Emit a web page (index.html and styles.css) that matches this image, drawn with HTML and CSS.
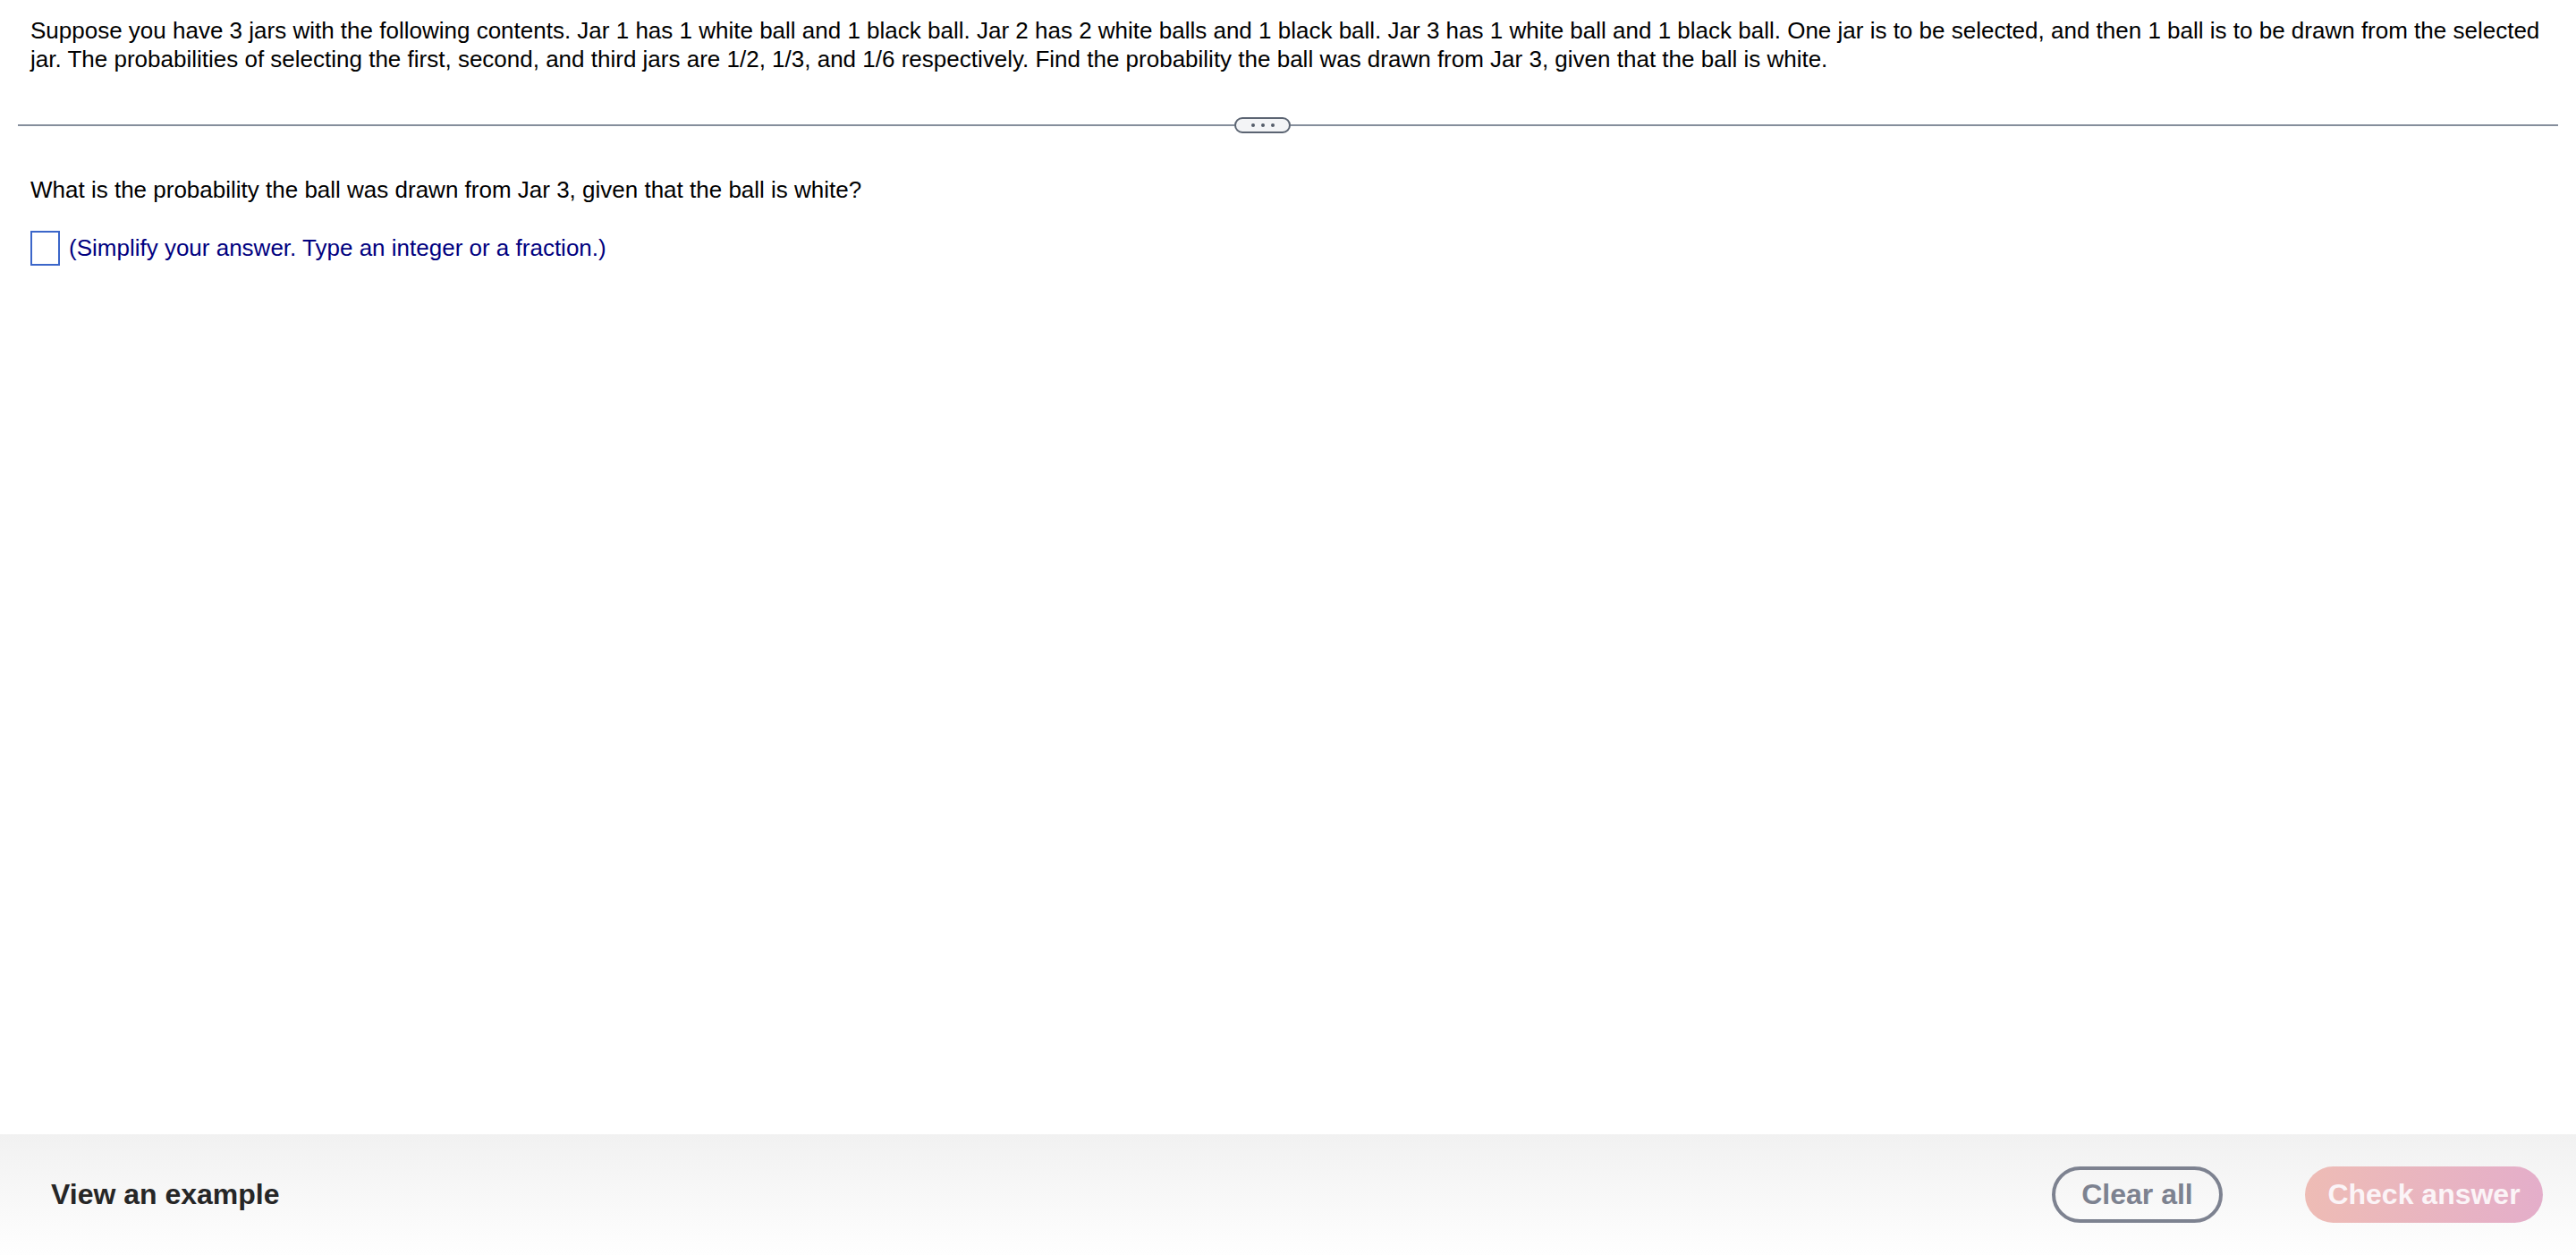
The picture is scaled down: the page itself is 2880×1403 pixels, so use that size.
FILE: index.html
```html
<!DOCTYPE html>
<html lang="en">
<head>
  <meta charset="UTF-8">
  <title>Question</title>
  <link rel="stylesheet" href="styles.css">
</head>
<body>
  <div class="page">
    <div class="main">
      <p class="problem">Suppose you have 3 jars with the following contents. Jar 1 has 1 white ball and 1 black ball. Jar 2 has 2 white balls and 1 black ball. Jar 3 has 1 white ball and 1 black ball. One jar is to be selected, and then 1 ball is to be drawn from the selected jar. The probabilities of selecting the first, second, and third jars are 1/2, 1/3, and 1/6 respectively. Find the probability the ball was drawn from Jar 3, given that the ball is white.</p>

      <div class="divider">
        <span class="rule rule-left"></span>
        <button class="more"><span></span><span></span><span></span></button>
        <span class="rule"></span>
      </div>

      <p class="question">What is the probability the ball was drawn from Jar 3, given that the ball is white?</p>

      <div class="answer">
        <input type="text" class="answer-box">
        <span class="hint">(Simplify your answer. Type an integer or a fraction.)</span>
      </div>
    </div>

    <div class="footer">
      <a class="example">View an example</a>
      <div class="actions">
        <button class="clear">Clear all</button>
        <button class="check" disabled>Check answer</button>
      </div>
    </div>
  </div>
</body>
</html>
```

FILE: styles.css
```css
body {
  margin: 0;
  padding: 0;
  font-family: "Liberation Sans", Arial, sans-serif;
  color: #000;
  background: #fff;
}

.page {
  display: flex;
  flex-direction: column;
  height: 100vh;
}

.main {
  flex: 1;
}

.problem {
  margin: 0;
  padding: 18px 34px 0;
  font-size: 26px;
  line-height: 32px;
}

.divider {
  display: flex;
  align-items: center;
  margin: 49px 20px 0;
  height: 18px;
}

.rule {
  flex: 1;
  height: 2px;
  background: #858e9c;
}

.rule-left {
  flex: 0 0 1360px;
}

.more {
  display: flex;
  align-items: center;
  justify-content: center;
  gap: 7px;
  width: 63px;
  height: 18px;
  padding: 0;
  border: 2px solid #5b6472;
  border-radius: 9px;
  background: #f3f4f6;
}

.more span {
  width: 4px;
  height: 4px;
  border-radius: 50%;
  background: #555d6a;
}

.question {
  margin: 0;
  padding: 47px 34px 0;
  font-size: 26px;
  line-height: 32px;
}

.answer {
  display: flex;
  align-items: center;
  gap: 10px;
  padding: 30px 34px 0;
}

.answer-box {
  width: 33px;
  height: 39px;
  box-sizing: border-box;
  margin: 0;
  border: 2px solid #3b66c9;
  background: #fff;
}

.hint {
  font-size: 26px;
  color: #00007f;
}

.footer {
  display: flex;
  align-items: center;
  justify-content: space-between;
  height: 135px;
  padding: 0 37px 0 57px;
  background: linear-gradient(#f1f1f1, #fefefe);
}

.example {
  font-size: 32px;
  font-weight: bold;
  color: #262626;
}

.actions {
  display: flex;
  gap: 92px;
}

.actions button {
  height: 63px;
  border-radius: 32px;
  font-family: inherit;
  font-size: 32px;
  font-weight: bold;
}

.clear {
  width: 191px;
  border: 4px solid #7d8290;
  background: transparent;
  color: #7d8290;
}

.check {
  width: 266px;
  border: none;
  background: linear-gradient(90deg, #eebcb5, #e4aeca);
  color: #fbf4f7;
}
```
